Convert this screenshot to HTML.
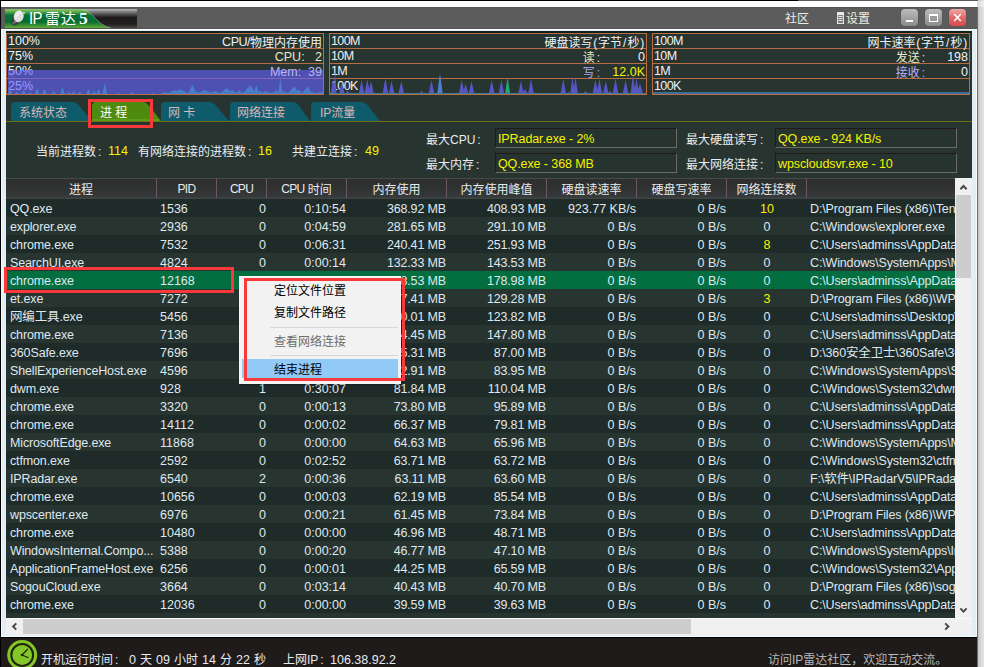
<!DOCTYPE html>
<html lang="zh-CN">
<head>
<meta charset="utf-8">
<title>IP雷达 5</title>
<style>
html,body{margin:0;padding:0;}
body{width:984px;height:667px;overflow:hidden;background:#fff;position:relative;
 font-family:"Liberation Sans","Noto Sans CJK SC",sans-serif;font-size:12.5px;color:#dfe8ef;}
div,span,svg{position:absolute;box-sizing:border-box;white-space:nowrap;}
.cj{font-family:"Liberation Sans","Noto Sans CJK SC",sans-serif;font-size:12px;font-weight:400;margin-top:1px;}
.ci{position:relative;top:0.5px;font-family:"Liberation Sans","Noto Sans CJK SC",sans-serif;font-size:12px;font-weight:400;}
.k{position:static;margin-left:2px;}
.u{position:relative;top:-1px;font-size:12px;letter-spacing:-0.7px;}
.h{position:static;display:inline-block;width:5.5px;text-align:center;}
.t{line-height:15px;height:15px;margin-top:1px;}
.r{text-align:right;}
.c{text-align:center;}
.y{color:#f4f400;}
.row{left:6px;width:949px;height:18px;overflow:hidden;}
.row span{top:1px;height:18px;line-height:19px;}
.row .n{left:4px;width:146px;overflow:hidden;letter-spacing:-0.14px;}
.row .p{left:154px;}
.row .c1{left:211px;width:49px;text-align:right;}
.row .c2{left:261px;width:79px;text-align:right;}
.row .c3{left:341px;width:99px;text-align:right;letter-spacing:-0.15px;}
.row .c4{left:441px;width:99px;text-align:right;letter-spacing:-0.15px;}
.row .c5{left:541px;width:89px;text-align:right;}
.row .c6{left:631px;width:89px;text-align:right;}
.row .c7{left:721px;width:80px;text-align:center;}
.row .c8{left:804px;letter-spacing:-0.15px;}
.hd{top:178px;height:21px;line-height:22px;text-align:center;color:#e8ecec;}
.sep{top:179px;width:1px;height:19px;background:#6e5566;}
.box{height:20px;width:182px;border:1px solid;border-color:#221a18 #6a6a6a #6a6a6a #221a18;background:#27332e;}
.box span{left:2px;top:2px;line-height:17px;color:#f4f400;font-size:12.5px;letter-spacing:-0.1px;}
.mi{left:34px;font-family:"Noto Sans CJK SC",sans-serif;font-size:12px;color:#000;line-height:16px;height:16px;}
</style>
</head>
<body>

<div style="left:0;top:0;width:798px;height:1px;background:#000"></div>
<div style="left:798px;top:0;width:180px;height:1px;background:#5a5a5a"></div>
<div style="left:977px;top:0;width:7px;height:667px;background:linear-gradient(90deg,#6e6e6e 0,#6e6e6e 1px,#c2c2c2 1px,#cfcfcf 2px,#e4e4e4 7px)"></div>
<div style="left:977px;top:1px;width:7px;height:6px;background:linear-gradient(90deg,#d8d8d8,#f0f0f0)"></div>
<div style="left:0;top:0;width:1px;height:667px;background:#000"></div>
<div id="title" style="left:1px;top:7px;width:976px;height:22px;background:linear-gradient(#4e4e4e 0,#5c5c5c 1px,#5c5c5c 20px,#555 22px)"></div>
<div style="left:1px;top:29px;width:976px;height:608px;background:#e3eef4;border-top:1px solid #f8fdff;border-bottom:1px solid #f8fdff;border-right:1px solid #f4fbff;border-left:1px solid #f4fbff"></div>
<div style="left:6px;top:31px;width:966px;height:587px;background:#28342f;border-top:2px solid #10201a"></div>
<svg style="left:5px;top:9px" width="134" height="19" viewBox="0 0 134 19">
<defs>
<linearGradient id="gg" x1="0" y1="0" x2="0" y2="1"><stop offset="0" stop-color="#8fc878"/><stop offset="0.1" stop-color="#6eb454"/><stop offset="0.25" stop-color="#2a8a3c"/><stop offset="0.34" stop-color="#07703a"/><stop offset="0.68" stop-color="#066c33"/><stop offset="0.82" stop-color="#2f8a30"/><stop offset="1" stop-color="#62a83c"/></linearGradient>
<linearGradient id="kg" x1="0" y1="0" x2="0" y2="1"><stop offset="0" stop-color="#b8b8b8"/><stop offset="0.2" stop-color="#6a6a6a"/><stop offset="0.45" stop-color="#1c1a1a"/><stop offset="0.8" stop-color="#231f1f"/><stop offset="1" stop-color="#4a4848"/></linearGradient>
<linearGradient id="fade" x1="0" y1="0" x2="1" y2="0"><stop offset="0" stop-color="#5c5c5c" stop-opacity="0"/><stop offset="1" stop-color="#5c5c5c" stop-opacity="0.55"/></linearGradient>
<radialGradient id="dish" cx="0.45" cy="0.35" r="0.75"><stop offset="0" stop-color="#f4f4f4"/><stop offset="0.75" stop-color="#dcdcdc"/><stop offset="1" stop-color="#b4b8b6"/></radialGradient>
</defs>
<rect x="0" y="0" width="132" height="19" fill="url(#kg)"/>
<path d="M0,0 L76,0 C88,1 92,17 106,19 L0,19 Z" fill="url(#gg)"/>
<path d="M76,0 C88,1 92,17 106,19" fill="none" stroke="#cfd8cf" stroke-opacity="0.55" stroke-width="0.8"/>
<ellipse cx="10.3" cy="12.3" rx="4.6" ry="3.9" transform="rotate(-35 10.3 12.3)" fill="#39413d"/>
<ellipse cx="9.6" cy="13.4" rx="2.4" ry="1.3" transform="rotate(-20 9.6 13.4)" fill="#6a716d"/>
<ellipse cx="13.7" cy="7.4" rx="4.9" ry="6" transform="rotate(18 13.7 7.4)" fill="url(#dish)"/>
<path d="M12.5,9.5 L16,5.2" stroke="#b9b9b9" stroke-width="0.8"/>
<circle cx="19" cy="3.8" r="0.9" fill="#eef6ee"/>
</svg>
<div style="left:29px;top:8px;height:21px;line-height:21px;color:#fff;font-size:16px;letter-spacing:-0.8px;transform:scaleX(0.93);transform-origin:0 0">IP</div>
<div style="left:45px;top:8px;height:21px;line-height:20px;color:#fff;font-family:'Noto Sans CJK SC',sans-serif;font-size:15px;letter-spacing:1px">雷达</div>
<div style="left:79px;top:8px;height:21px;line-height:21px;color:#fff;font-family:'Liberation Serif',serif;font-weight:bold;font-size:17.5px">5</div>
<div class="cj" style="left:785px;top:10px;line-height:16px;color:#ececec">社区</div>
<svg style="left:837px;top:12px" width="7" height="12" viewBox="0 0 7 12"><rect x="0.5" y="0.5" width="6" height="11" fill="#7c7c7c" stroke="#e4e4e4"/><rect x="1" y="1" width="5" height="2" fill="#f0f0f0"/><rect x="1.5" y="4" width="4" height="1" fill="#e8e8e8"/><rect x="1.5" y="6" width="4" height="1" fill="#e8e8e8"/><rect x="1.5" y="8" width="4" height="1" fill="#e8e8e8"/></svg>
<div class="cj" style="left:846px;top:10px;line-height:16px;color:#f0f0e2">设置</div>
<div style="left:901px;top:9px;width:17px;height:17px;border-radius:4px;background:linear-gradient(#bdbdbd,#8a8a8a);box-shadow:0 0 1px #3a3a3a"></div>
<div style="left:906px;top:20px;width:7px;height:2px;background:#fff"></div>
<div style="left:925px;top:9px;width:17px;height:17px;border-radius:4px;background:linear-gradient(#bdbdbd,#8a8a8a);box-shadow:0 0 1px #3a3a3a"></div>
<div style="left:929px;top:14px;width:9px;height:8px;border:1px solid #fff;border-top-width:2px;background:#9a9a9a"></div>
<div style="left:949px;top:9px;width:17px;height:17px;border-radius:4px;background:linear-gradient(#f2a7a7,#e26868 50%,#d94a4a);box-shadow:0 0 1px #3a3a3a"></div>
<svg style="left:949px;top:9px" width="17" height="17" viewBox="0 0 17 17"><path d="M5.2,5 L11.8,12 M11.8,5 L5.2,12" stroke="#fff" stroke-width="1.7" fill="none"/></svg>
<svg style="left:0;top:0" width="984" height="100" viewBox="0 0 984 100" shape-rendering="crispEdges"><rect x="6.5" y="33.5" width="317" height="61" fill="none" stroke="#b96d42"/><line x1="6" y1="48.5" x2="324" y2="48.5" stroke="#b96d42"/><line x1="6" y1="63.5" x2="324" y2="63.5" stroke="#b96d42"/><line x1="6" y1="78.5" x2="324" y2="78.5" stroke="#b96d42"/><rect x="329.5" y="33.5" width="317" height="61" fill="none" stroke="#b96d42"/><line x1="329" y1="48.5" x2="647" y2="48.5" stroke="#b96d42"/><line x1="329" y1="63.5" x2="647" y2="63.5" stroke="#b96d42"/><line x1="329" y1="78.5" x2="647" y2="78.5" stroke="#b96d42"/><rect x="652.5" y="33.5" width="317" height="61" fill="none" stroke="#b96d42"/><line x1="652" y1="48.5" x2="970" y2="48.5" stroke="#b96d42"/><line x1="652" y1="63.5" x2="970" y2="63.5" stroke="#b96d42"/><line x1="652" y1="78.5" x2="970" y2="78.5" stroke="#b96d42"/></svg>
<div class="t " style="left:8px;top:33px;color:#eef3f8;">100%</div>
<div class="t " style="left:8px;top:48px;color:#eef3f8;">75%</div>
<div class="t " style="left:8px;top:63px;color:#eef3f8;">50%</div>
<div class="t " style="left:8px;top:78px;color:#eef3f8;">25%</div>
<div class="t r " style="left:122px;width:200px;top:34px;color:#eef3f8;"><span style="position:static;letter-spacing:-0.5px">CPU/</span><span class="ci">物理内存使用</span></div>
<div class="t r " style="left:122px;width:200px;top:49px;color:#e9e9c8;">CPU:&nbsp;&nbsp;&nbsp;2</div>
<div class="t " style="left:331px;top:33px;color:#eef3f8;letter-spacing:-0.6px;">100M</div>
<div class="t " style="left:654px;top:33px;color:#eef3f8;letter-spacing:-0.6px;">100M</div>
<div class="t " style="left:331px;top:48px;color:#eef3f8;letter-spacing:-0.6px;">10M</div>
<div class="t " style="left:654px;top:48px;color:#eef3f8;letter-spacing:-0.6px;">10M</div>
<div class="t " style="left:331px;top:63px;color:#eef3f8;letter-spacing:-0.6px;">1M</div>
<div class="t " style="left:654px;top:63px;color:#eef3f8;letter-spacing:-0.6px;">1M</div>
<div class="t " style="left:331px;top:78px;color:#eef3f8;letter-spacing:-0.6px;">100K</div>
<div class="t " style="left:654px;top:78px;color:#eef3f8;letter-spacing:-0.6px;">100K</div>
<div class="t r " style="left:445px;width:200px;top:34px;color:#eef3f8;"><span class="ci">硬盘读写<span class="h">(</span>字节<span class="h">/</span>秒<span class="h">)</span></span></div>
<div class="t r " style="left:445px;width:200px;top:49px;color:#eef3f8;"><span class="ci" style="color:#e9e9c8">读<span class="k">:</span></span><span style="position:static;display:inline-block;width:45px;text-align:right">0</span></div>
<div class="t r " style="left:445px;width:200px;top:64px;color:#eef3f8;"><span class="ci" style="color:#aaa8f4">写<span class="k">:</span></span><span style="position:static;display:inline-block;width:45px;text-align:right;color:#f2f200">12.0K</span></div>
<div class="t r " style="left:768px;width:200px;top:34px;color:#eef3f8;"><span class="ci">网卡速率<span class="h">(</span>字节<span class="h">/</span>秒<span class="h">)</span></span></div>
<div class="t r " style="left:768px;width:200px;top:49px;color:#eef3f8;"><span class="ci" style="color:#e9e9c8">发送<span class="k">:</span></span><span style="position:static;display:inline-block;width:43px;text-align:right">198</span></div>
<div class="t r " style="left:768px;width:200px;top:64px;color:#eef3f8;"><span class="ci" style="color:#b4b0ff">接收<span class="k">:</span></span><span style="position:static;display:inline-block;width:43px;text-align:right">0</span></div>
<svg style="left:0;top:0" width="984" height="100" viewBox="0 0 984 100"><rect x="8" y="70" width="315" height="24" fill="rgba(102,96,255,0.63)" shape-rendering="crispEdges"/><path d="M7.6,94 L10.0,88.0 L12.4,94 Z M14.3,94 L16.7,92.0 L19.1,94 Z M21.1,94 L23.5,90.0 L25.9,94 Z M27.6,94 L30.0,92.0 L32.4,94 Z M34.6,94 L37.0,88.0 L39.4,94 Z M42.0,94 L44.4,89.0 L46.8,94 Z M51.3,94 L53.7,91.0 L56.1,94 Z M60.0,94 L62.4,87.0 L64.8,94 Z M66.4,94 L68.8,92.0 L71.2,94 Z M71.1,94 L73.5,91.0 L75.9,94 Z M77.3,94 L79.7,92.0 L82.1,94 Z M86.0,94 L88.4,89.0 L90.8,94 Z M91.6,94 L94.0,91.0 L96.4,94 Z M96.2,94 L98.6,89.0 L101.0,94 Z M102.4,94 L104.8,83.0 L107.2,94 Z M115.6,94 L118.0,93.0 L120.4,94 Z M129.3,94 L131.7,92.0 L134.1,94 Z M150.2,94 L152.6,93.0 L155.0,94 Z" fill="#4a7ec9"/><path d="M160.0,94.0 L164.6,92.0 L168.0,93.0 L174.7,90.0 L177.0,91.0 L180.0,89.0 L182.0,91.0 L183.8,90.5 L187.0,93.0 L189.0,92.0 L192.4,85.0 L196.0,92.0 L200.0,92.5 L204.9,90.0 L210.0,92.5 L215.8,91.0 L220.0,93.0 L223.0,91.0 L226.8,88.0 L230.0,91.0 L232.3,90.0 L235.0,92.5 L237.0,92.0 L239.6,90.0 L242.0,93.0 L245.0,91.0 L250.6,85.0 L254.0,91.0 L256.5,85.0 L258.0,91.5 L259.7,91.0 L262.0,92.5 L266.0,91.0 L270.0,93.0 L274.0,92.0 L276.2,90.0 L278.5,92.5 L280.4,78.0 L282.3,92.0 L284.4,91.0 L287.0,93.0 L290.0,91.0 L294.5,86.0 L297.0,90.5 L299.0,90.0 L302.0,93.0 L304.0,91.0 L307.7,86.0 L311.0,92.0 L316.0,93.0 L321.0,92.0 L323.0,93.0 L323.0,94.0 Z" fill="#4a7ec9"/><path d="M333.4,94 L335.0,70.0 L336.6,94 Z M330.5,94 L333.0,80.0 L335.5,94 Z M338.9,94 L341.8,82.0 L344.7,94 Z M344.7,94 L347.6,91.0 L350.5,94 Z M358.7,94 L361.6,80.0 L364.5,94 Z M364.4,94 L367.3,79.0 L370.2,94 Z M368.1,94 L371.0,81.0 L373.9,94 Z M382.5,94 L385.4,78.0 L388.3,94 Z M388.7,94 L391.6,81.0 L394.5,94 Z M398.4,94 L401.3,81.0 L404.2,94 Z M418.6,94 L421.5,91.0 L424.4,94 Z M428.6,94 L431.5,80.0 L434.4,94 Z M458.8,94 L461.7,80.0 L464.6,94 Z M462.7,94 L465.6,84.0 L468.5,94 Z M468.6,94 L471.5,81.0 L474.4,94 Z M488.8,94 L491.7,80.0 L494.6,94 Z M498.5,94 L501.4,80.0 L504.3,94 Z M518.1,94 L521.0,81.0 L523.9,94 Z M522.1,94 L525.0,89.0 L527.9,94 Z M528.1,94 L531.0,79.0 L533.9,94 Z M560.4,94 L563.3,79.0 L566.2,94 Z M566.0,94 L568.9,92.0 L571.8,94 Z M570.3,94 L572.5,76.0 L574.7,94 Z M573.0,94 L575.5,77.0 L578.0,94 Z M582.7,94 L585.6,91.0 L588.5,94 Z M592.5,94 L595.4,80.0 L598.3,94 Z M596.5,94 L599.4,79.0 L602.3,94 Z M602.9,94 L605.8,81.0 L608.7,94 Z M607.1,94 L610.0,91.0 L612.9,94 Z M612.6,94 L615.5,79.0 L618.4,94 Z M622.7,94 L625.6,80.0 L628.5,94 Z M630.5,94 L633.0,74.0 L635.5,94 Z M634.0,94 L636.5,78.0 L639.0,94 Z M637.0,94 L640.0,83.0 L643.0,94 Z" fill="#5656c4"/><path d="M437.2,94 L440.0,73.0 L442.8,94 Z" fill="#4a80d4"/><path d="M505.0,94 L507.6,77.0 L510.2,94 Z" fill="#27a86f"/><rect x="330" y="92.6" width="316" height="1.4" fill="#3b7a9c" shape-rendering="crispEdges"/><rect x="653" y="92" width="316" height="2" fill="#3c6f9e" shape-rendering="crispEdges"/></svg>
<div class="t r " style="left:122px;width:200px;top:64px;color:#b9b4f4;">Mem:&nbsp;&nbsp;39</div>
<svg style="left:0;top:96px" width="984" height="30" viewBox="0 96 984 30"><path d="M11,121 L11,106 Q11,102 15,102 L73,102 Q76,102 78,104.5 L92,121 Z" fill="#0e5c6b"/><path d="M161,121 L161,106 Q161,102 165,102 L210,102 Q213,102 215,104.5 L229,121 Z" fill="#0e5c6b"/><path d="M230,121 L230,106 Q230,102 234,102 L293,102 Q296,102 298,104.5 L310,121 Z" fill="#0e5c6b"/><path d="M311,121 L311,106 Q311,102 315,102 L362,102 Q365,102 367,104.5 L380,121 Z" fill="#0e5c6b"/><path d="M92,121 L92,106 Q92,102 96,102 L143,102 Q146,102 148,104.5 L161,121 Z" fill="#4e8a0e"/><rect x="92" y="119" width="67" height="2" fill="#5d9c17"/><rect x="6" y="121" width="966" height="1" fill="#6f7016" shape-rendering="crispEdges"/></svg>
<div class="cj" style="left:19px;top:104px;color:#dbb7b7;line-height:16px;">系统状态</div>
<div class="cj" style="left:100px;top:104px;line-height:16px;color:#fff;font-weight:400">进&nbsp;程</div>
<div class="cj" style="left:168px;top:104px;color:#dbb7b7;line-height:16px;">网&nbsp;卡</div>
<div class="cj" style="left:237px;top:104px;color:#dbb7b7;line-height:16px;">网络连接</div>
<div class="cj" style="left:320px;top:104px;color:#dbb7b7;line-height:16px;">IP流量</div>
<div style="left:88px;top:99px;width:65px;height:29px;border:3px solid #f93a3a"></div>
<div class="cj" style="left:36px;line-height:16px;top:143px;color:#e8eef2">当前进程数<span class="k">:</span></div>
<div class="y" style="left:108px;line-height:16px;top:143px;">114</div>
<div class="cj" style="left:138px;line-height:16px;top:143px;color:#e8eef2">有网络连接的进程数<span class="k">:</span></div>
<div class="y" style="left:258px;line-height:16px;top:143px;">16</div>
<div class="cj" style="left:292px;line-height:16px;top:143px;color:#e8eef2">共建立连接<span class="k">:</span></div>
<div class="y" style="left:365px;line-height:16px;top:143px;">49</div>
<div class="cj" style="left:426px;top:131px;line-height:16px;color:#e8eef2">最大CPU<span class="k">:</span></div>
<div class="cj" style="left:426px;top:156px;line-height:16px;color:#e8eef2">最大内存<span class="k">:</span></div>
<div class="cj" style="left:686px;top:131px;line-height:16px;color:#e8eef2">最大硬盘读写<span class="k">:</span></div>
<div class="cj" style="left:686px;top:156px;line-height:16px;color:#e8eef2">最大网络连接<span class="k">:</span></div>
<div class="box" style="left:495px;top:128px"><span>IPRadar.exe - 2%</span></div>
<div class="box" style="left:495px;top:153px"><span>QQ.exe - 368 MB</span></div>
<div class="box" style="left:775px;top:128px"><span>QQ.exe - 924 KB/s</span></div>
<div class="box" style="left:775px;top:153px"><span>wpscloudsvr.exe - 10</span></div>
<div style="left:6px;top:178px;width:949px;height:21px;background:linear-gradient(#474b4a 0,#474b4a 1px,#2d2e2e 1px,#303131 10px,#373a3a 19px,#3e4544 20px,#3e4544 21px)"></div>
<div class="hd cj" style="left:6px;width:150px">进程</div>
<div class="sep" style="left:156px"></div>
<div class="hd cj" style="left:157px;width:59px"><span class="u">PID</span></div>
<div class="sep" style="left:216px"></div>
<div class="hd cj" style="left:217px;width:49px"><span class="u">CPU</span></div>
<div class="sep" style="left:266px"></div>
<div class="hd cj" style="left:267px;width:79px"><span class="u">CPU</span> 时间</div>
<div class="sep" style="left:346px"></div>
<div class="hd cj" style="left:347px;width:99px">内存使用</div>
<div class="sep" style="left:446px"></div>
<div class="hd cj" style="left:447px;width:99px">内存使用峰值</div>
<div class="sep" style="left:546px"></div>
<div class="hd cj" style="left:547px;width:89px">硬盘读速率</div>
<div class="sep" style="left:636px"></div>
<div class="hd cj" style="left:637px;width:89px">硬盘写速率</div>
<div class="sep" style="left:726px"></div>
<div class="hd cj" style="left:727px;width:79px">网络连接数</div>
<div class="sep" style="left:806px"></div>
<div class="row" style="top:199px;height:18px;background:#1f2b28">
<span class="n">QQ.exe</span><span class="p">1536</span><span class="c1">0</span><span class="c2">0:10:54</span><span class="c3">368.92 MB</span><span class="c4">408.93 MB</span><span class="c5">923.77 KB/s</span><span class="c6">0 B/s</span><span class="c7 y">10</span><span class="c8">D:\Program Files (x86)\Tencent\QQ\Bin\QQ.exe</span></div>
<div class="row" style="top:217px;height:18px;background:#28342f">
<span class="n">explorer.exe</span><span class="p">2936</span><span class="c1">0</span><span class="c2">0:04:59</span><span class="c3">281.65 MB</span><span class="c4">291.10 MB</span><span class="c5">0 B/s</span><span class="c6">0 B/s</span><span class="c7">0</span><span class="c8">C:\Windows\explorer.exe</span></div>
<div class="row" style="top:235px;height:18px;background:#1f2b28">
<span class="n">chrome.exe</span><span class="p">7532</span><span class="c1">0</span><span class="c2">0:06:31</span><span class="c3">240.41 MB</span><span class="c4">251.93 MB</span><span class="c5">0 B/s</span><span class="c6">0 B/s</span><span class="c7 y">8</span><span class="c8">C:\Users\adminss\AppData\Local\Google\Chrome\Application\chrome.exe</span></div>
<div class="row" style="top:253px;height:18px;background:#28342f">
<span class="n">SearchUI.exe</span><span class="p">4824</span><span class="c1">0</span><span class="c2">0:00:14</span><span class="c3">132.33 MB</span><span class="c4">143.53 MB</span><span class="c5">0 B/s</span><span class="c6">0 B/s</span><span class="c7">0</span><span class="c8">C:\Windows\SystemApps\Microsoft.Windows.Cortana_cw5n1h2txyewy\SearchUI.exe</span></div>
<div class="row" style="top:271px;height:18px;background:#036f40">
<span class="n">chrome.exe</span><span class="p">12168</span><span class="c1">0</span><span class="c2">0:00:41</span><span class="c3">128.53 MB</span><span class="c4">178.98 MB</span><span class="c5">0 B/s</span><span class="c6">0 B/s</span><span class="c7">0</span><span class="c8">C:\Users\adminss\AppData\Local\Google\Chrome\Application\chrome.exe</span></div>
<div class="row" style="top:289px;height:18px;background:#28342f">
<span class="n">et.exe</span><span class="p">7272</span><span class="c1">0</span><span class="c2">0:01:12</span><span class="c3">117.41 MB</span><span class="c4">129.28 MB</span><span class="c5">0 B/s</span><span class="c6">0 B/s</span><span class="c7 y">3</span><span class="c8">D:\Program Files (x86)\WPS Office\office6\et.exe</span></div>
<div class="row" style="top:307px;height:18px;background:#1f2b28">
<span class="n">网编工具.exe</span><span class="p">5456</span><span class="c1">0</span><span class="c2">0:00:09</span><span class="c3">110.01 MB</span><span class="c4">123.82 MB</span><span class="c5">0 B/s</span><span class="c6">0 B/s</span><span class="c7">0</span><span class="c8">C:\Users\adminss\Desktop\网编工具\网编工具.exe</span></div>
<div class="row" style="top:325px;height:18px;background:#28342f">
<span class="n">chrome.exe</span><span class="p">7136</span><span class="c1">0</span><span class="c2">0:00:05</span><span class="c3">104.45 MB</span><span class="c4">147.80 MB</span><span class="c5">0 B/s</span><span class="c6">0 B/s</span><span class="c7">0</span><span class="c8">C:\Users\adminss\AppData\Local\Google\Chrome\Application\chrome.exe</span></div>
<div class="row" style="top:343px;height:18px;background:#1f2b28">
<span class="n">360Safe.exe</span><span class="p">7696</span><span class="c1">0</span><span class="c2">0:00:33</span><span class="c3">85.31 MB</span><span class="c4">87.00 MB</span><span class="c5">0 B/s</span><span class="c6">0 B/s</span><span class="c7">0</span><span class="c8">D:\360安全卫士\360Safe\360Safe.exe</span></div>
<div class="row" style="top:361px;height:18px;background:#28342f">
<span class="n">ShellExperienceHost.exe</span><span class="p">4596</span><span class="c1">0</span><span class="c2">0:00:07</span><span class="c3">82.91 MB</span><span class="c4">83.95 MB</span><span class="c5">0 B/s</span><span class="c6">0 B/s</span><span class="c7">0</span><span class="c8">C:\Windows\SystemApps\ShellExperienceHost_cw5n1h2txyewy\ShellExperienceHost.exe</span></div>
<div class="row" style="top:379px;height:18px;background:#1f2b28">
<span class="n">dwm.exe</span><span class="p">928</span><span class="c1">1</span><span class="c2">0:30:07</span><span class="c3">81.84 MB</span><span class="c4">110.04 MB</span><span class="c5">0 B/s</span><span class="c6">0 B/s</span><span class="c7">0</span><span class="c8">C:\Windows\System32\dwm.exe</span></div>
<div class="row" style="top:397px;height:18px;background:#28342f">
<span class="n">chrome.exe</span><span class="p">3320</span><span class="c1">0</span><span class="c2">0:00:13</span><span class="c3">73.80 MB</span><span class="c4">95.89 MB</span><span class="c5">0 B/s</span><span class="c6">0 B/s</span><span class="c7">0</span><span class="c8">C:\Users\adminss\AppData\Local\Google\Chrome\Application\chrome.exe</span></div>
<div class="row" style="top:415px;height:18px;background:#1f2b28">
<span class="n">chrome.exe</span><span class="p">14112</span><span class="c1">0</span><span class="c2">0:00:02</span><span class="c3">66.37 MB</span><span class="c4">79.81 MB</span><span class="c5">0 B/s</span><span class="c6">0 B/s</span><span class="c7">0</span><span class="c8">C:\Users\adminss\AppData\Local\Google\Chrome\Application\chrome.exe</span></div>
<div class="row" style="top:433px;height:18px;background:#28342f">
<span class="n">MicrosoftEdge.exe</span><span class="p">11868</span><span class="c1">0</span><span class="c2">0:00:00</span><span class="c3">64.63 MB</span><span class="c4">65.96 MB</span><span class="c5">0 B/s</span><span class="c6">0 B/s</span><span class="c7">0</span><span class="c8">C:\Windows\SystemApps\Microsoft.MicrosoftEdge_8wekyb3d8bbwe\MicrosoftEdge.exe</span></div>
<div class="row" style="top:451px;height:18px;background:#1f2b28">
<span class="n">ctfmon.exe</span><span class="p">2592</span><span class="c1">0</span><span class="c2">0:02:52</span><span class="c3">63.71 MB</span><span class="c4">63.72 MB</span><span class="c5">0 B/s</span><span class="c6">0 B/s</span><span class="c7">0</span><span class="c8">C:\Windows\System32\ctfmon.exe</span></div>
<div class="row" style="top:469px;height:18px;background:#28342f">
<span class="n">IPRadar.exe</span><span class="p">6540</span><span class="c1">2</span><span class="c2">0:00:36</span><span class="c3">63.11 MB</span><span class="c4">63.60 MB</span><span class="c5">0 B/s</span><span class="c6">0 B/s</span><span class="c7">0</span><span class="c8">F:\软件\IPRadarV5\IPRadar.exe</span></div>
<div class="row" style="top:487px;height:18px;background:#1f2b28">
<span class="n">chrome.exe</span><span class="p">10656</span><span class="c1">0</span><span class="c2">0:00:03</span><span class="c3">62.19 MB</span><span class="c4">85.54 MB</span><span class="c5">0 B/s</span><span class="c6">0 B/s</span><span class="c7">0</span><span class="c8">C:\Users\adminss\AppData\Local\Google\Chrome\Application\chrome.exe</span></div>
<div class="row" style="top:505px;height:18px;background:#28342f">
<span class="n">wpscenter.exe</span><span class="p">6976</span><span class="c1">0</span><span class="c2">0:00:21</span><span class="c3">61.45 MB</span><span class="c4">73.84 MB</span><span class="c5">0 B/s</span><span class="c6">0 B/s</span><span class="c7">0</span><span class="c8">D:\Program Files (x86)\WPS Office\office6\wpscenter.exe</span></div>
<div class="row" style="top:523px;height:18px;background:#1f2b28">
<span class="n">chrome.exe</span><span class="p">10480</span><span class="c1">0</span><span class="c2">0:00:00</span><span class="c3">46.96 MB</span><span class="c4">48.71 MB</span><span class="c5">0 B/s</span><span class="c6">0 B/s</span><span class="c7">0</span><span class="c8">C:\Users\adminss\AppData\Local\Google\Chrome\Application\chrome.exe</span></div>
<div class="row" style="top:541px;height:18px;background:#28342f">
<span class="n">WindowsInternal.Compo...</span><span class="p">5388</span><span class="c1">0</span><span class="c2">0:00:20</span><span class="c3">46.77 MB</span><span class="c4">47.10 MB</span><span class="c5">0 B/s</span><span class="c6">0 B/s</span><span class="c7">0</span><span class="c8">C:\Windows\SystemApps\InputApp_cw5n1h2txyewy\WindowsInternal.ComposableShell.exe</span></div>
<div class="row" style="top:559px;height:18px;background:#1f2b28">
<span class="n">ApplicationFrameHost.exe</span><span class="p">6256</span><span class="c1">0</span><span class="c2">0:00:01</span><span class="c3">44.25 MB</span><span class="c4">65.59 MB</span><span class="c5">0 B/s</span><span class="c6">0 B/s</span><span class="c7">0</span><span class="c8">C:\Windows\System32\ApplicationFrameHost.exe</span></div>
<div class="row" style="top:577px;height:18px;background:#28342f">
<span class="n">SogouCloud.exe</span><span class="p">3664</span><span class="c1">0</span><span class="c2">0:03:14</span><span class="c3">40.43 MB</span><span class="c4">40.70 MB</span><span class="c5">0 B/s</span><span class="c6">0 B/s</span><span class="c7">0</span><span class="c8">D:\Program Files (x86)\sogou\SogouCloud.exe</span></div>
<div class="row" style="top:595px;height:18px;background:#1f2b28">
<span class="n">chrome.exe</span><span class="p">12036</span><span class="c1">0</span><span class="c2">0:00:00</span><span class="c3">39.59 MB</span><span class="c4">39.63 MB</span><span class="c5">0 B/s</span><span class="c6">0 B/s</span><span class="c7">0</span><span class="c8">C:\Users\adminss\AppData\Local\Google\Chrome\Application\chrome.exe</span></div>
<div class="row" style="top:613px;height:5px;background:#28342f">
<span class="n">chrome.exe</span><span class="p">9124</span><span class="c1">0</span><span class="c2">0:00:01</span><span class="c3">38.77 MB</span><span class="c4">52.10 MB</span><span class="c5">0 B/s</span><span class="c6">0 B/s</span><span class="c7">0</span><span class="c8">C:\Users\adminss\AppData\Local\Google\Chrome\Application\chrome.exe</span></div>
<div style="left:4px;top:267px;width:230px;height:26px;border:3px solid #f93a3a"></div>
<div style="left:955px;top:178px;width:17px;height:440px;background:#f0f0f0"></div>
<div style="left:956px;top:195px;width:15px;height:83px;background:#cdcdcd"></div>
<svg style="left:955px;top:178px" width="17" height="17" viewBox="0 0 17 17"><path d="M5.4,11.2 L8.5,8 L11.6,11.2" fill="none" stroke="#484848" stroke-width="2"/></svg>
<svg style="left:955px;top:601px" width="17" height="17" viewBox="0 0 17 17"><path d="M5.4,7.4 L8.5,10.6 L11.6,7.4" fill="none" stroke="#484848" stroke-width="2"/></svg>
<div style="left:6px;top:618px;width:966px;height:17px;background:#f0f0f0;border-top:1px solid #fbfbfb"></div>
<div style="left:23px;top:619px;width:668px;height:15px;background:#cdcdcd"></div>
<svg style="left:6px;top:618px" width="17" height="17" viewBox="0 0 17 17"><path d="M10.3,5.4 L7.1,8.5 L10.3,11.6" fill="none" stroke="#484848" stroke-width="2"/></svg>
<svg style="left:938px;top:618px" width="17" height="17" viewBox="0 0 17 17"><path d="M7.2,5.4 L10.4,8.5 L7.2,11.6" fill="none" stroke="#484848" stroke-width="2"/></svg>
<div style="left:239px;top:276px;width:162px;height:108px;background:#f2f2f2;border:1px solid #f7f7f7;box-shadow:1px 1px 2px rgba(0,0,0,0.35)">
<div style="left:2px;top:82px;width:156px;height:19px;background:#91c9f7"></div>
<div style="left:30px;top:50px;width:128px;height:1px;background:#d7d7d7"></div>
<div style="left:30px;top:78px;width:128px;height:1px;background:#d7d7d7"></div>
<div class="mi" style="top:5px">定位文件位置</div>
<div class="mi" style="top:27px">复制文件路径</div>
<div class="mi" style="top:56px;color:#6d6d6d">查看网络连接</div>
<div class="mi" style="top:84px">结束进程</div>
</div>
<div style="left:244px;top:278px;width:161px;height:103px;border:3px solid #f93a3a"></div>
<div style="left:1px;top:637px;width:976px;height:30px;background:#1f1b1a;border-top:1px solid #000"></div>
<svg style="left:6px;top:638px" width="32" height="29" viewBox="0 0 32 29">
<circle cx="16.2" cy="17" r="15" fill="#84c628"/>
<circle cx="16.2" cy="17" r="10.9" fill="none" stroke="#1c2410" stroke-width="2"/>
<path d="M16,17 L21.8,11 M16,17 L22.6,19.8" stroke="#1a200e" stroke-width="1.1" fill="none"/>
<circle cx="16" cy="17" r="1.2" fill="#1a200e"/>
</svg>
<div class="cj" style="left:41px;top:651px;line-height:16px;color:#e6ebf0;font-weight:400">开机运行时间<span class="k">:</span></div>
<div style="left:129px;top:652px;line-height:16px;color:#e6ebf0;">0</div>
<div class="cj" style="left:140px;top:651px;line-height:16px;color:#e6ebf0;">天</div>
<div style="left:156px;top:652px;line-height:16px;color:#e6ebf0;">09</div>
<div class="cj" style="left:174px;top:651px;line-height:16px;color:#e6ebf0;">小时</div>
<div style="left:202px;top:652px;line-height:16px;color:#e6ebf0;">14</div>
<div class="cj" style="left:220px;top:651px;line-height:16px;color:#e6ebf0;">分</div>
<div style="left:236px;top:652px;line-height:16px;color:#e6ebf0;">22</div>
<div class="cj" style="left:254px;top:651px;line-height:16px;color:#e6ebf0;">秒</div>
<div class="cj" style="left:283px;top:651px;line-height:16px;color:#e6ebf0;">上网IP<span class="k">:</span></div>
<div style="left:330px;top:652px;line-height:16px;color:#e6ebf0;">106.38.92.2</div>
<div class="cj" style="left:768px;top:651px;line-height:16px;color:#b9b9b9">访问IP雷达社区，欢迎互动交流。</div>
</body>
</html>
